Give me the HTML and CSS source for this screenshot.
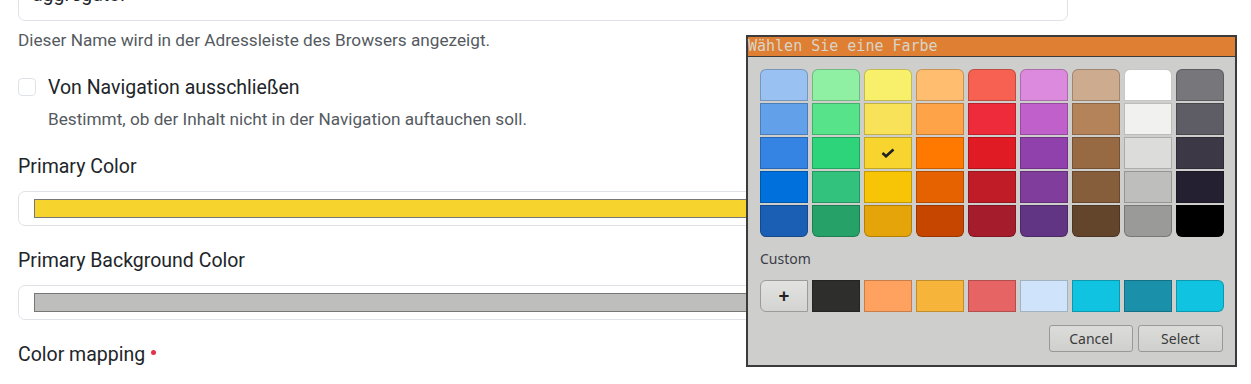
FILE: index.html
```html
<!DOCTYPE html>
<html lang="de">
<head>
    <meta charset="UTF-8">
    <title>Einstellungen</title>
    <link rel="stylesheet" href="styles.css">
</head>
<body>
    <div class="form">
        <div class="text-input">aggregator</div>
        <p class="help first">Dieser Name wird in der Adressleiste des Browsers angezeigt.</p>

        <label class="check-row">
            <span class="check-box"></span>
            <span class="check-label">Von Navigation ausschließen</span>
        </label>
        <p class="help indent">Bestimmt, ob der Inhalt nicht in der Navigation auftauchen soll.</p>

        <div class="field-label">Primary Color</div>
        <div class="color-input"><div class="color-bar yellow"></div></div>

        <div class="field-label">Primary Background Color</div>
        <div class="color-input"><div class="color-bar grey"></div></div>

        <div class="field-label">Color mapping <span class="required"></span></div>
    </div>

    <!-- GTK Farbwähler, liegt über dem Formular -->
    <div class="picker">
        <div class="picker-title">Wählen Sie eine Farbe</div>
        <div class="picker-body">
            <div class="palette">
                <div class="col">
                    <span class="sw" style="background:#99c1f1"></span>
                    <span class="sw" style="background:#62a0ea"></span>
                    <span class="sw" style="background:#3584e4"></span>
                    <span class="sw" style="background:#0071dc"></span>
                    <span class="sw" style="background:#1a5fb4"></span>
                </div>
                <div class="col">
                    <span class="sw" style="background:#8ff0a4"></span>
                    <span class="sw" style="background:#57e389"></span>
                    <span class="sw" style="background:#2ed47a"></span>
                    <span class="sw" style="background:#33c27e"></span>
                    <span class="sw" style="background:#26a269"></span>
                </div>
                <div class="col">
                    <span class="sw" style="background:#f8f06b"></span>
                    <span class="sw" style="background:#f8e25a"></span>
                    <span class="sw selected" style="background:#f8d52e">
                        <svg width="14" height="10" viewBox="0 0 14 10"><path d="M1.5 5 L5 8.3 L12.5 1.5" fill="none" stroke="#222" stroke-width="2.6" stroke-linejoin="miter"/></svg>
                    </span>
                    <span class="sw" style="background:#f7c406"></span>
                    <span class="sw" style="background:#e5a50a"></span>
                </div>
                <div class="col">
                    <span class="sw" style="background:#ffbe6f"></span>
                    <span class="sw" style="background:#ffa348"></span>
                    <span class="sw" style="background:#ff7800"></span>
                    <span class="sw" style="background:#e66100"></span>
                    <span class="sw" style="background:#c64600"></span>
                </div>
                <div class="col">
                    <span class="sw" style="background:#f66151"></span>
                    <span class="sw" style="background:#ed2b3b"></span>
                    <span class="sw" style="background:#e01b24"></span>
                    <span class="sw" style="background:#c01c28"></span>
                    <span class="sw" style="background:#a51d2d"></span>
                </div>
                <div class="col">
                    <span class="sw" style="background:#dc8add"></span>
                    <span class="sw" style="background:#c061cb"></span>
                    <span class="sw" style="background:#9141ac"></span>
                    <span class="sw" style="background:#813d9c"></span>
                    <span class="sw" style="background:#613583"></span>
                </div>
                <div class="col">
                    <span class="sw" style="background:#cdab8f"></span>
                    <span class="sw" style="background:#b5835a"></span>
                    <span class="sw" style="background:#986a44"></span>
                    <span class="sw" style="background:#865e3c"></span>
                    <span class="sw" style="background:#63452c"></span>
                </div>
                <div class="col">
                    <span class="sw" style="background:#ffffff"></span>
                    <span class="sw" style="background:#f1f2ef"></span>
                    <span class="sw" style="background:#dcdddb"></span>
                    <span class="sw" style="background:#bebfbd"></span>
                    <span class="sw" style="background:#9a9b99"></span>
                </div>
                <div class="col">
                    <span class="sw" style="background:#77767b"></span>
                    <span class="sw" style="background:#5e5c64"></span>
                    <span class="sw" style="background:#3d3846"></span>
                    <span class="sw" style="background:#241f31"></span>
                    <span class="sw" style="background:#000000"></span>
                </div>
            </div>

            <div class="custom-label">Custom</div>
            <div class="custom-row">
                <span class="add-btn">+</span>
                <span class="sw" style="background:#2e2e2c"></span>
                <span class="sw" style="background:#ffa25f"></span>
                <span class="sw" style="background:#f6b43a"></span>
                <span class="sw" style="background:#e66464"></span>
                <span class="sw" style="background:#cfe4fa"></span>
                <span class="sw" style="background:#10c3e0"></span>
                <span class="sw" style="background:#1a90aa"></span>
                <span class="sw last" style="background:#10c3e0"></span>
            </div>

            <div class="actions">
                <button class="gtk-btn cancel">Cancel</button>
                <button class="gtk-btn select">Select</button>
            </div>
        </div>
    </div>
</body>
</html>
```

FILE: styles.css
```css
body {
    margin: 0;
    font-family: Roboto, "Liberation Sans", sans-serif;
    background: #ffffff;
    color: #212529;
    overflow: hidden;
}

.form {
    padding-left: 18px;
    width: 1050px;
}

/* Eingabefelder */
.text-input {
    box-sizing: border-box;
    height: 45px;
    margin-top: -24px;
    padding: 6px 13px 0;
    border: 1px solid #dfe3e8;
    border-radius: 7px;
    font-size: 19.5px;
    color: #212529;
}

.help {
    margin: 0;
    font-size: 17.2px;
    line-height: 20px;
    color: #555a5f;
}

.help.first {
    margin-top: 9px;
}

.help.indent {
    margin-top: 12px;
    padding-left: 30px;
}

.check-row {
    display: flex;
    align-items: center;
    margin-top: 27px;
    height: 20px;
}

.check-box {
    box-sizing: border-box;
    width: 18px;
    height: 18px;
    border: 1px solid #dfe3e8;
    border-radius: 4px;
    margin-right: 12px;
}

.check-label {
    font-size: 19.5px;
    color: #212529;
}

.field-label {
    margin-top: 27px;
    font-size: 19.5px;
    line-height: 22px;
    color: #212529;
}

.color-input + .field-label {
    margin-top: 24px;
}

.color-input {
    box-sizing: border-box;
    height: 35px;
    margin-top: 13px;
    padding: 7px 15px 0;
    border: 1px solid #dfe3e8;
    border-radius: 7px;
}

.color-bar {
    box-sizing: border-box;
    height: 19px;
    border: 1px solid #777777;
}

.color-bar.yellow {
    background: #f6d32d;
}

.color-bar.grey {
    background: #bebfbd;
}

.required {
    display: inline-block;
    width: 5px;
    height: 5px;
    border-radius: 50%;
    background: #e0334a;
    vertical-align: 6px;
    margin-left: 1px;
}

/* Farbwähler Dialog */
.picker {
    position: absolute;
    left: 746px;
    top: 35px;
    width: 491px;
    height: 332px;
    box-sizing: border-box;
    border: 2px solid #3b3b3b;
    background: #cecfcc;
    font-family: "Noto Sans", "Open Sans", sans-serif;
}

.picker-title {
    height: 19px;
    line-height: 19px;
    background: #df7f33;
    border-bottom: 1px solid #3b3b3b;
    color: #d8d4c8;
    font-family: "DejaVu Sans Mono", monospace;
    font-size: 15px;
    white-space: nowrap;
}

.picker-body {
    padding: 12px 11px 0 12px;
}

.palette {
    display: flex;
    gap: 4px;
}

.col {
    display: flex;
    flex-direction: column;
    gap: 2px;
}

.sw {
    box-sizing: border-box;
    width: 48px;
    height: 32px;
    border: 1px solid rgba(0, 0, 0, 0.22);
    display: flex;
    align-items: center;
    justify-content: center;
}

.col .sw:first-child {
    border-radius: 6px 6px 0 0;
}

.col .sw:last-child {
    border-radius: 0 0 6px 6px;
}

.custom-label {
    margin-top: 12px;
    font-size: 14px;
    line-height: 20px;
    color: #3c3c48;
}

.custom-row {
    display: flex;
    gap: 4px;
    margin-top: 11px;
}

.custom-row .sw.last {
    border-radius: 0 6px 6px 0;
}

.add-btn {
    box-sizing: border-box;
    width: 48px;
    height: 32px;
    border: 1px solid #9b9c99;
    border-radius: 6px 0 0 6px;
    background: linear-gradient(#e2e3e0, #d3d4d1);
    display: flex;
    align-items: center;
    justify-content: center;
    font-size: 19px;
    font-weight: bold;
    color: #222;
}

.actions {
    display: flex;
    justify-content: flex-end;
    gap: 5px;
    margin-top: 13px;
    padding-right: 1px;
}

.gtk-btn {
    box-sizing: border-box;
    height: 27px;
    padding: 0;
    border: 1px solid #999a97;
    border-radius: 3px;
    background: linear-gradient(#dcddda, #cfd0cd);
    font-family: "Noto Sans", "Open Sans", sans-serif;
    font-size: 14px;
    color: #3a3a3a;
}

.gtk-btn.cancel {
    width: 84px;
}

.gtk-btn.select {
    width: 85px;
}
```
